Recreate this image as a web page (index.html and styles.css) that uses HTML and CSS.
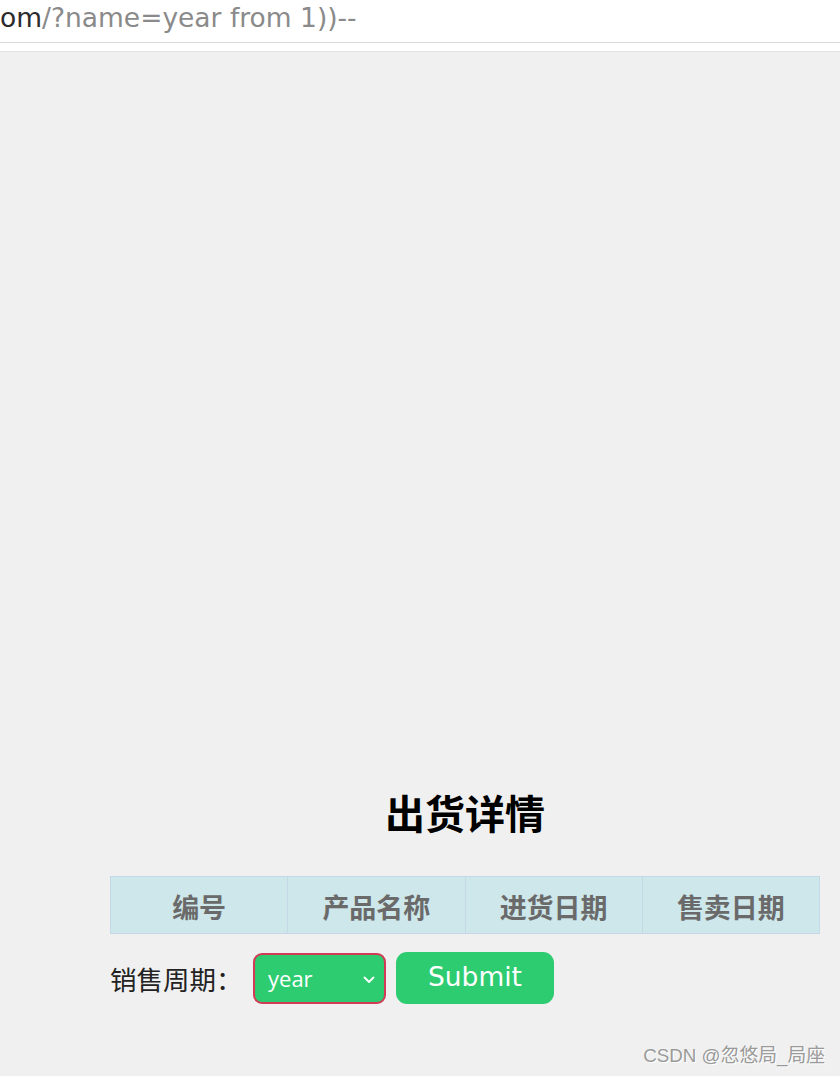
FILE: index.html
```html
<!DOCTYPE html>
<html lang="zh">
<head>
<meta charset="utf-8">
<title>出货详情</title>
<link rel="stylesheet" href="styles.css">
</head>
<body>
<div class="urlbar"><span class="host">om</span><span class="path">/?name=year from 1))--</span></div>
<div class="strip"></div>
<main class="page">
  <div class="content">
    <h1 class="title">出货详情</h1>
    <table class="grid">
      <thead>
        <tr><th>编号</th><th>产品名称</th><th>进货日期</th><th>售卖日期</th></tr>
      </thead>
    </table>
    <form class="filter">
      <label class="label" for="period">销售周期：</label>
      <div class="select-wrap">
        <select id="period" class="select"><option>year</option></select>
        <svg class="chev" width="12" height="8" viewBox="0 0 12 8"><path d="M1.5 1.5 L6 6 L10.5 1.5" fill="none" stroke="#fff" stroke-width="1.8" stroke-linecap="round" stroke-linejoin="round"/></svg>
      </div>
      <button type="button" class="submit">Submit</button>
    </form>
  </div>
  <div class="watermark">CSDN @忽悠局_局座</div>
</main>
</body>
</html>
```
FILE: styles.css
```css
html, body {
  margin: 0;
  padding: 0;
}
body {
  width: 840px;
  height: 1076px;
  overflow: hidden;
  background: #f0f0f0;
  font-family: "DejaVu Sans", "Noto Sans CJK SC", sans-serif;
}
.urlbar {
  height: 43px;
  background: #fff;
  border-bottom: 1px solid #dcdcdc;
  font-size: 26.5px;
  line-height: 36px;
  white-space: nowrap;
  overflow: hidden;
  box-sizing: border-box;
}
.host { color: #2b2b2b; }
.path { color: #8a8a8a; }
.strip {
  height: 8px;
  background: #fff;
  border-bottom: 1px solid #e2e2e2;
}
.page {
  position: relative;
  height: 1023px;
}
.content {
  margin-left: 110px;
  width: 710px;
  padding-top: 736px;
}
.title {
  margin: 0 0 40px 0;
  text-align: center;
  font-family: "Noto Sans CJK SC", sans-serif;
  font-weight: 700;
  font-size: 40px;
  line-height: 48px;
  color: #000;
}
.grid {
  width: 710px;
  border-collapse: collapse;
  table-layout: fixed;
}
.grid th {
  height: 57px;
  padding: 3px 0 0 0;
  background: #cde7ea;
  border: 1px solid #c6d8e8;
  color: #6a6a6a;
  font-family: "Noto Sans CJK SC", sans-serif;
  font-weight: 700;
  font-size: 27px;
  line-height: 50px;
  text-align: center;
  box-sizing: border-box;
}
.filter {
  display: flex;
  align-items: center;
  margin-top: 18px;
}
.label {
  font-family: "Noto Sans CJK SC", sans-serif;
  font-size: 26.5px;
  color: #222;
  width: 143px;
}
.select-wrap {
  position: relative;
  width: 133px;
  height: 51px;
}
.select {
  appearance: none;
  -webkit-appearance: none;
  width: 133px;
  height: 51px;
  box-sizing: border-box;
  border: 2px solid #d23a55;
  border-radius: 9px;
  background: #2ecc71;
  color: #fff;
  font-family: "Open Sans", "Noto Sans", sans-serif;
  font-size: 22px;
  padding: 0 0 0 13px;
  outline: none;
}
.chev {
  position: absolute;
  right: 11px;
  top: 23px;
}
.submit {
  margin-left: 10px;
  width: 158px;
  height: 52px;
  border: none;
  border-radius: 11px;
  background: #2ecc71;
  color: #fff;
  font-family: "DejaVu Sans", sans-serif;
  font-size: 26.5px;
  padding: 0 0 3px 0;
}
.watermark {
  position: absolute;
  right: 15px;
  bottom: 8px;
  font-family: "Liberation Sans", "Noto Sans CJK SC", sans-serif;
  font-size: 18.8px;
  color: #9a9a9a;
  text-shadow: 1px 1px 0 #fff;
}
```
